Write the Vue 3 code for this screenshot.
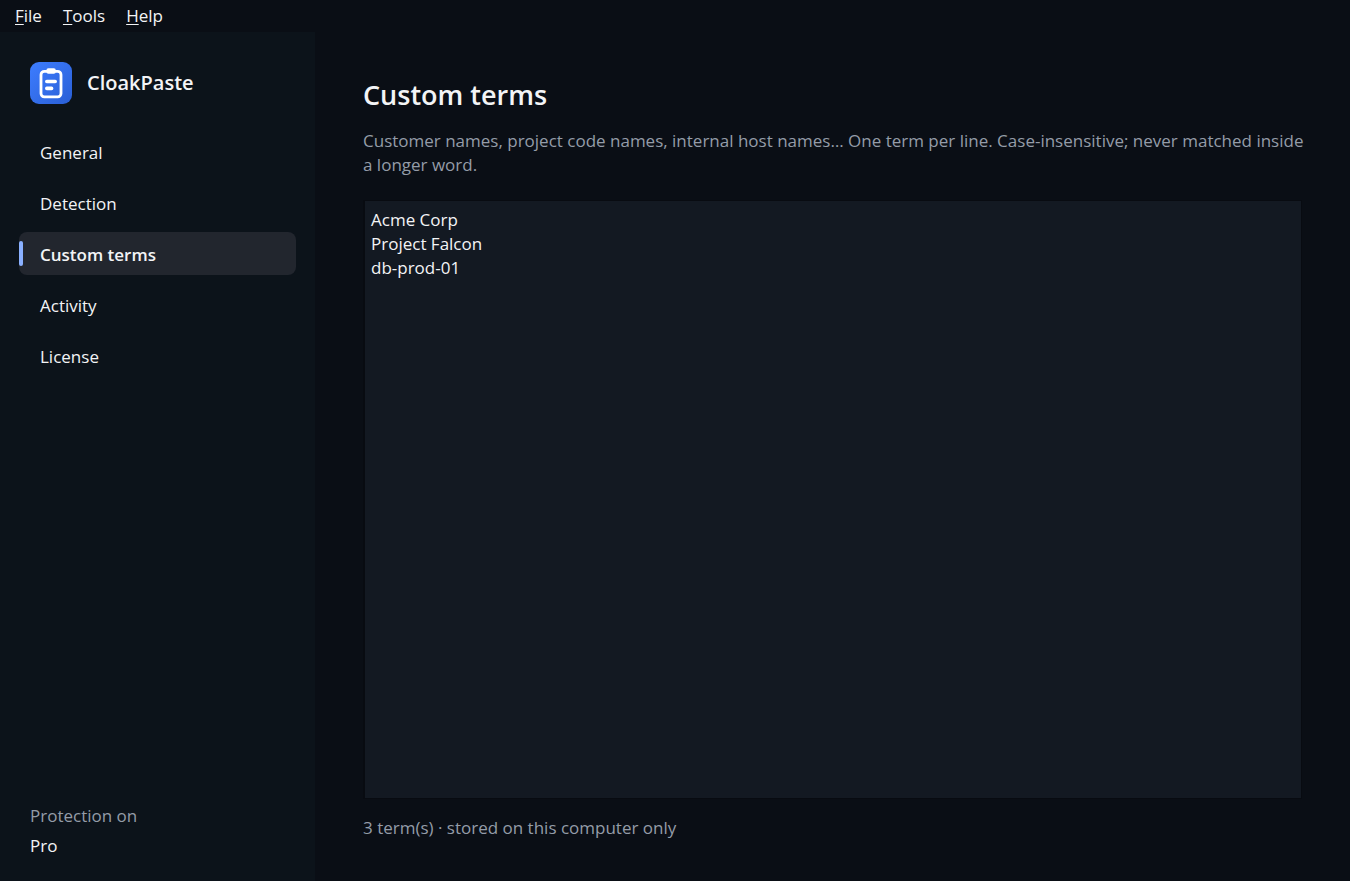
<script setup>
import { computed, ref } from 'vue'

const menus = ['File', 'Tools', 'Help']
const pages = ['General', 'Detection', 'Custom terms', 'Activity', 'License']
const current = ref('Custom terms')
const terms = ref('Acme Corp\nProject Falcon\ndb-prod-01')
const termCount = computed(() => terms.value.split('\n').filter((t) => t.trim()).length)
</script>

<template>
  <div class="window">
    <header class="menubar">
      <button v-for="menu in menus" :key="menu" type="button" class="menu"><u>{{ menu[0] }}</u>{{ menu.slice(1) }}</button>
    </header>
    <div class="body">
      <aside class="sidebar">
        <div class="brand">
          <svg class="logo" viewBox="0 0 42 42" aria-hidden="true">
            <defs>
              <linearGradient id="logo-fill" x1="0" y1="0" x2="1" y2="1">
                <stop offset="0" stop-color="#3d7dff" />
                <stop offset="1" stop-color="#2a5fd6" />
              </linearGradient>
            </defs>
            <rect width="42" height="42" rx="9" fill="url(#logo-fill)" />
            <rect x="11" y="9.3" width="20" height="25.6" rx="3.4" fill="none" stroke="#fff" stroke-width="2.8" />
            <rect x="16.4" y="6.2" width="9.4" height="5.6" rx="2" fill="#fff" />
            <path d="M16.8 19.5H25.2M16.8 26.4H21.6" stroke="#fff" stroke-width="3.6" stroke-linecap="round" />
          </svg>
          <span class="name">CloakPaste</span>
        </div>
        <nav class="nav">
          <button
            v-for="page in pages"
            :key="page"
            type="button"
            class="item"
            :class="{ active: page === current }"
            @click="current = page"
          >{{ page }}</button>
        </nav>
        <footer class="status">
          <span class="muted">Protection on</span>
          <span>Pro</span>
        </footer>
      </aside>
      <main class="content">
        <h1 class="title">Custom terms</h1>
        <label class="hint" for="terms">Customer names, project code names, internal host names… One term per line. Case-insensitive; never matched inside a longer word.</label>
        <textarea id="terms" v-model="terms" class="editor" spellcheck="false"></textarea>
        <p class="count">{{ termCount }} term(s) · stored on this computer only</p>
      </main>
    </div>
  </div>
</template>

<style>
body {
  margin: 0;
  background: #0a0e15;
}
</style>

<style scoped>
.window {
  display: flex;
  flex-direction: column;
  min-height: 100vh;
  background: #0a0e15;
  color: #f3f4f6;
  font-family: "Open Sans", "Noto Sans", sans-serif;
  font-size: 17px;
  line-height: 24px;
}
button {
  border: 0;
  background: none;
  color: inherit;
  font: inherit;
  text-align: left;
}
.menubar {
  display: flex;
  gap: 21px;
  height: 32px;
  padding: 0 15px;
}
.menu {
  padding: 0;
}
.menu u {
  text-decoration-thickness: 1px;
  text-underline-offset: 2px;
}
.body {
  display: flex;
  flex: 1;
}
.sidebar {
  display: flex;
  flex-direction: column;
  flex: none;
  box-sizing: border-box;
  width: 315px;
  padding: 30px 19px 23px;
  background: #0c131a;
}
.brand {
  display: flex;
  align-items: center;
  gap: 15px;
  padding-left: 11px;
}
.logo {
  width: 42px;
  height: 42px;
}
.name {
  font-size: 20px;
  font-weight: 600;
}
.nav {
  display: flex;
  flex-direction: column;
  gap: 8px;
  margin-top: 26px;
}
.item {
  position: relative;
  height: 43px;
  padding: 2px 21px 0;
  border-radius: 8px;
}
.item.active {
  background: #22262e;
  font-weight: 600;
}
.item.active::before {
  content: "";
  position: absolute;
  top: 9px;
  left: 0;
  width: 4px;
  height: 25px;
  border-radius: 2px;
  background: #8ab0ff;
}
.status {
  display: flex;
  flex-direction: column;
  gap: 6px;
  margin-top: auto;
  padding-left: 11px;
}
.muted,
.hint,
.count {
  color: #949ca8;
}
.content {
  display: flex;
  flex-direction: column;
  flex: 1;
  min-width: 0;
  padding: 45px 40px 41px 48px;
}
.title {
  margin: 0;
  font-size: 27px;
  font-weight: 600;
  line-height: 36px;
}
.hint {
  margin-top: 16px;
}
.editor {
  flex: 1;
  margin: 23px 8px 0 0;
  padding: 7px 6px;
  border: 2px solid #080b11;
  border-width: 1px 1px 1px 2px;
  background: #131922;
  color: inherit;
  font: inherit;
  resize: none;
  outline: none;
}
.count {
  margin: 17px 0 0;
}
</style>
